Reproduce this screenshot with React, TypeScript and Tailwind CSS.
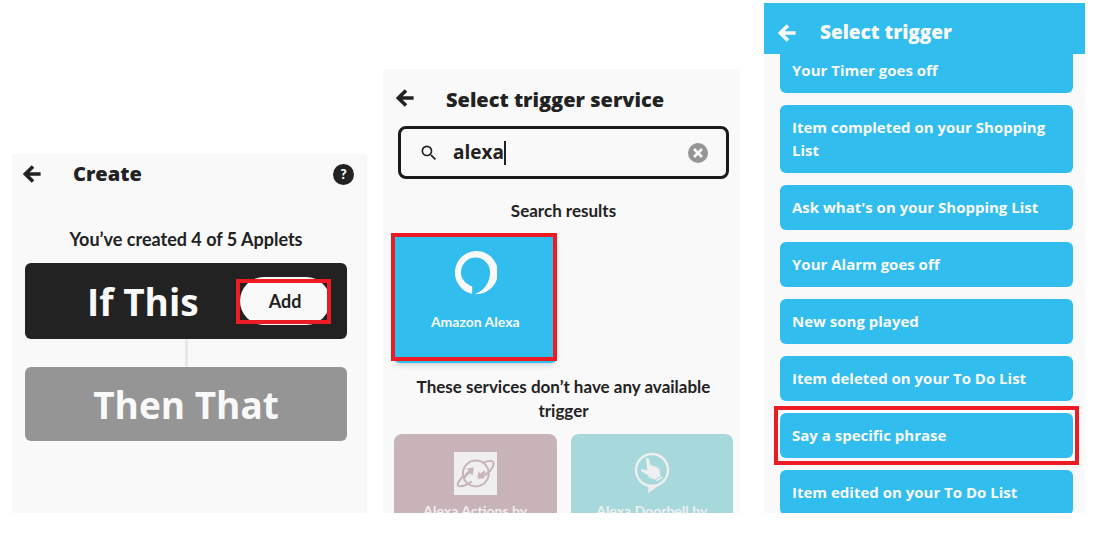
import { MdSearch } from "react-icons/md";

function BackArrow() {
  return (
    <svg viewBox="0 0 18 18" className="size-[18px]" fill="none" stroke="currentColor" strokeWidth="3.6" aria-hidden="true">
      <path d="M17.6 9H3M10 1.4 2.4 9l7.6 7.6" />
    </svg>
  );
}

function AlexaLogo() {
  return (
    <svg viewBox="0 0 130 130" className="size-[43px]" fill="currentColor" aria-hidden="true">
      <path d="M55 129A65 65 0 1 1 62 130C90 122 109 95 109 64A44 44 0 1 0 21 64C21 85 35 99 55 107Z" />
    </svg>
  );
}

function ActionsLogo() {
  return (
    <svg viewBox="0 0 130 130" className="size-[43px]" aria-hidden="true">
      <rect width="130" height="130" fill="#efefef" />
      <g fill="none" stroke="#c8b3b8" strokeWidth="6">
        <circle cx="66" cy="65" r="39" />
        <path d="M88 33C105 24 121 25 120 35C119 48 104 64 84 76" />
        <path d="M30 72C16 84 7 97 13 102C20 107 40 99 54 89" />
        <path d="M30 80C34 70 42 62 50 56" strokeWidth="7" />
      </g>
      <path d="M37 50 60 47 56 71 49 64 40 71 37 64 45 56ZM74 59 80 65 92 56 96 62 86 71 92 79 71 81Z" fill="#c8b3b8" />
    </svg>
  );
}

function DoorbellLogo() {
  return (
    <svg viewBox="0 0 108 126" className="h-[42px] w-9" aria-hidden="true">
      <circle cx="54" cy="54" r="48" fill="none" stroke="#efefef" strokeWidth="7" />
      <path d="M43 98V124L76 99Z" fill="#efefef" />
      <path
        d="M36 20Q41 15 45 21L50 41Q55 38 60 43Q66 41 70 47Q75 47 77 53L79 70L88 80L70 88L62 82Q48 81 41 70L21 57Q19 51 29 52L40 56Z"
        fill="#efefef"
      />
      <path d="M65 82 80 74M73 86 86 80" stroke="#a6d8dc" strokeWidth="3" />
    </svg>
  );
}

function Highlight({ className }: { className: string }) {
  return <span aria-hidden="true" className={`pointer-events-none absolute border-4 border-[#ed1c24] ${className}`} />;
}

function CreatePanel() {
  return (
    <section className="mt-[151px] overflow-hidden bg-[#f9f9f9] pr-5 pl-[13px]">
      <header className="flex h-10 items-center">
        <button type="button" aria-label="Back" className="-ml-0.5">
          <BackArrow />
        </button>
        <h1 className="ml-8 flex-1 font-['Open_Sans',sans-serif] text-xl font-extrabold">Create</h1>
        <button
          type="button"
          aria-label="Help"
          className="-mr-[7px] flex size-[21px] items-center justify-center rounded-full bg-[#222] text-sm font-black text-[#f9f9f9]"
        >
          ?
        </button>
      </header>
      <p className="mt-[33px] text-center text-lg leading-6 font-bold">You’ve created 4 of 5 Applets</p>
      <div className="mt-3 flex h-[76px] items-center justify-between rounded-md bg-[#222] pr-[17px] pl-[62px]">
        <h2 className="font-['Open_Sans',sans-serif] text-[37px] leading-none font-bold text-[#f9f9f9]">If This</h2>
        <div className="relative">
          <button type="button" className="h-12 w-[90px] rounded-full bg-[#f9f9f9] text-lg font-bold">
            Add
          </button>
          <Highlight className="-right-px top-0.5 bottom-px -left-1" />
        </div>
      </div>
      <div className="mx-auto h-7 w-[3px] bg-[#e8e8e8]" />
      <div className="flex h-[74px] items-center justify-center rounded-md bg-[#959595]">
        <h2 className="font-['Open_Sans',sans-serif] text-[37px] leading-none font-bold text-[#f9f9f9]">Then That</h2>
      </div>
    </section>
  );
}

function ServicePanel() {
  return (
    <section className="mt-[66px] flex flex-col overflow-hidden bg-[#f9f9f9] pr-[7px] pl-[11px]">
      <header className="flex h-[57px] shrink-0 items-center">
        <button type="button" aria-label="Back" className="ml-0.5">
          <BackArrow />
        </button>
        <h1 className="ml-8 pt-1 font-['Open_Sans',sans-serif] text-xl font-extrabold">Select trigger service</h1>
      </header>
      <div className="mr-1 ml-1 flex h-[53px] shrink-0 items-center rounded-lg border-[3px] border-[#1a1a1a] px-[18px]">
        <MdSearch className="size-5" aria-hidden="true" />
        <input
          type="text"
          aria-label="Search services"
          defaultValue="alexa"
          className="ml-3.5 [field-sizing:content] bg-transparent font-['Open_Sans',sans-serif] text-[19px] font-bold caret-transparent outline-none"
        />
        <span className="h-6 w-0.5 bg-[#222]" aria-hidden="true" />
        <button
          type="button"
          aria-label="Clear search"
          className="ml-auto flex size-5 items-center justify-center rounded-full bg-[#959595]"
        >
          <svg viewBox="0 0 10 10" className="size-2.5" stroke="#f9f9f9" strokeWidth="2.6" aria-hidden="true">
            <path d="M1 1l8 8M9 1l-8 8" />
          </svg>
        </button>
      </div>
      <h2 className="mt-5 text-center text-[17px] leading-6 font-bold">Search results</h2>
      <div className="mt-3 grid shrink-0 grid-cols-2 gap-3.5">
        <div className="relative">
          <button
            type="button"
            className="flex h-[128px] w-full flex-col items-center rounded-md bg-[#31bdee] pt-4 text-[#f9f9f9] shadow-md"
          >
            <AlexaLogo />
            <span className="mt-[18px] text-sm leading-5 font-bold">Amazon Alexa</span>
          </button>
          <Highlight className="-top-0.5 right-0 bottom-0.5 -left-[3px]" />
        </div>
      </div>
      <h2 className="mx-3 mt-3 text-center text-[17px] leading-6 font-bold">
        These services don’t have any available trigger
      </h2>
      <div className="mt-[11px] grid shrink-0 grid-cols-2 gap-3.5 text-sm leading-5 font-bold text-[#efefef]">
        <button type="button" className="flex h-[128px] flex-col items-center rounded-lg bg-[#c8b3b8] px-6 pt-[18px]">
          <ActionsLogo />
          <span className="mt-1.5">Alexa Actions by</span>
        </button>
        <button type="button" className="flex h-[128px] flex-col items-center rounded-lg bg-[#a6d8dc] px-6 pt-[18px]">
          <DoorbellLogo />
          <span className="mt-[7px]">Alexa Doorbell by</span>
        </button>
      </div>
    </section>
  );
}

const triggers = [
  "Your Timer goes off",
  "Item completed on your Shopping List",
  "Ask what's on your Shopping List",
  "Your Alarm goes off",
  "New song played",
  "Item deleted on your To Do List",
  "Say a specific phrase",
  "Item edited on your To Do List",
];

function TriggerPanel() {
  return (
    <section className="flex flex-col overflow-hidden bg-[#f9f9f9]">
      <header className="z-10 flex h-[51px] shrink-0 items-center bg-[#31bdee] pt-2 pl-3.5 text-[#f9f9f9]">
        <button type="button" aria-label="Back">
          <BackArrow />
        </button>
        <h1 className="ml-6 font-['Open_Sans',sans-serif] text-[19px] font-extrabold">Select trigger</h1>
      </header>
      <ul className="-mt-1.5 flex flex-col gap-3 pr-3 pl-4">
        {triggers.map((name) => (
          <li key={name} className="relative">
            {name === "Say a specific phrase" && <Highlight className="-inset-x-1.5 -inset-y-[7px] bg-white" />}
            <button
              type="button"
              className="relative block w-full rounded-md bg-[#31bdee] px-3 py-[11px] text-left font-['Open_Sans',sans-serif] text-[15px] leading-[23px] font-bold text-[#f9f9f9]"
            >
              {name}
            </button>
          </li>
        ))}
      </ul>
    </section>
  );
}

export default function App() {
  return (
    <main className="grid h-screen grid-cols-[12px_355fr_16px_357fr_24px_321fr_21px] grid-rows-[minmax(0,1fr)] bg-white pt-[3px] pb-[25px] font-['Lato',sans-serif] text-[#222]">
      <div className="col-start-2 grid min-h-0">
        <CreatePanel />
      </div>
      <div className="col-start-4 grid min-h-0">
        <ServicePanel />
      </div>
      <div className="col-start-6 grid min-h-0">
        <TriggerPanel />
      </div>
    </main>
  );
}
